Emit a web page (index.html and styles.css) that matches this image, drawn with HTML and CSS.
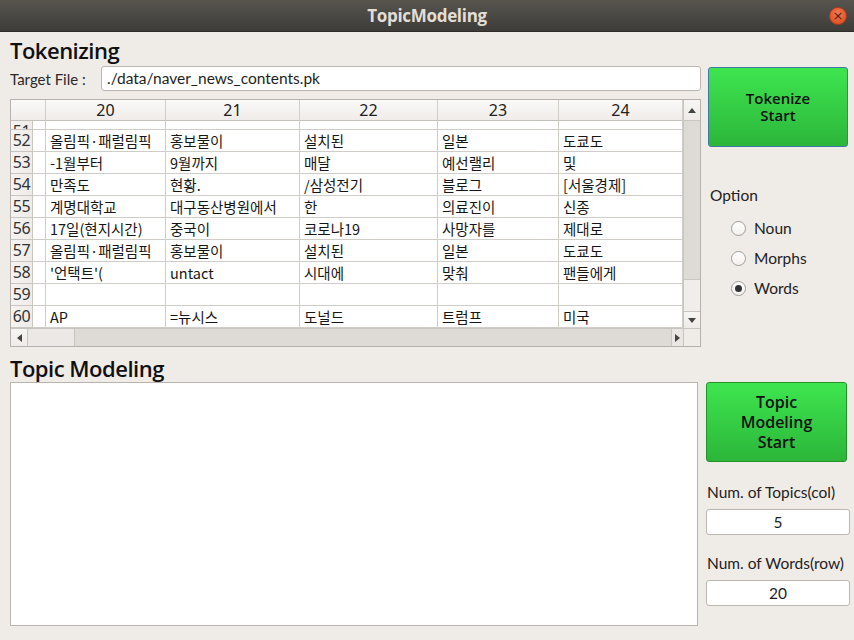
FILE: index.html
```html
<!DOCTYPE html>
<html>
<head>
<meta charset="utf-8">
<link rel="stylesheet" href="styles.css">
</head>
<body>
<div class="window">
  <header class="titlebar">
    <span></span>
    <span class="title">TopicModeling</span>
    <span class="close-wrap"><span class="close">×</span></span>
  </header>
  <main class="content">
    <section class="tok">
      <h1 class="heading">Tokenizing</h1>
      <div class="tok-body">
        <div class="tok-left">
          <div class="file-row">
            <label class="file-label">Target File :</label>
            <div class="text-input">./data/naver_news_contents.pk</div>
          </div>
          <div class="table-view">
            <div class="cells">
              <div class="hdr corner"></div>
              <div class="hdr">20</div><div class="hdr">21</div><div class="hdr">22</div><div class="hdr">23</div><div class="hdr">24</div>

              <div class="vh partial"><span>51</span></div><div class="c partial"></div><div class="c partial"></div><div class="c partial"></div><div class="c partial"></div><div class="c partial"></div><div class="c partial"></div>

              <div class="vh">52</div><div class="c"></div><div class="c">올림픽·패럴림픽</div><div class="c">홍보물이</div><div class="c">설치된</div><div class="c">일본</div><div class="c">도쿄도</div>
              <div class="vh">53</div><div class="c"></div><div class="c">-1월부터</div><div class="c">9월까지</div><div class="c">매달</div><div class="c">예선랠리</div><div class="c">및</div>
              <div class="vh">54</div><div class="c"></div><div class="c">만족도</div><div class="c">현황.</div><div class="c">/삼성전기</div><div class="c">블로그</div><div class="c">[서울경제]</div>
              <div class="vh">55</div><div class="c"></div><div class="c">계명대학교</div><div class="c">대구동산병원에서</div><div class="c">한</div><div class="c">의료진이</div><div class="c">신종</div>
              <div class="vh">56</div><div class="c"></div><div class="c">17일(현지시간)</div><div class="c">중국이</div><div class="c">코로나19</div><div class="c">사망자를</div><div class="c">제대로</div>
              <div class="vh">57</div><div class="c"></div><div class="c">올림픽·패럴림픽</div><div class="c">홍보물이</div><div class="c">설치된</div><div class="c">일본</div><div class="c">도쿄도</div>
              <div class="vh">58</div><div class="c"></div><div class="c">'언택트'(</div><div class="c">untact</div><div class="c">시대에</div><div class="c">맞춰</div><div class="c">팬들에게</div>
              <div class="vh">59</div><div class="c"></div><div class="c"></div><div class="c"></div><div class="c"></div><div class="c"></div><div class="c"></div>
              <div class="vh">60</div><div class="c"></div><div class="c">AP</div><div class="c">=뉴시스</div><div class="c">도널드</div><div class="c">트럼프</div><div class="c">미국</div>
            </div>
            <div class="vscroll">
              <div class="sb-btn sb-up"><span class="tri tri-up"></span></div>
              <div class="sb-track"></div>
              <div class="sb-handle-v"></div>
              <div class="sb-btn sb-down"><span class="tri tri-down"></span></div>
            </div>
            <div class="hscroll">
              <div class="sb-btn sb-left"><span class="tri tri-left"></span></div>
              <div class="sb-handle-h"></div>
              <div class="sb-track"></div>
              <div class="sb-btn sb-right"><span class="tri tri-right"></span></div>
            </div>
            <div class="sb-corner"></div>
          </div>
        </div>
        <div class="tok-right">
          <button class="green-btn tok-btn">Tokenize<br>Start</button>
          <div class="option-label">Option</div>
          <div class="radio-list">
            <div class="radio-row"><span class="radio"></span><span>Noun</span></div>
            <div class="radio-row"><span class="radio"></span><span>Morphs</span></div>
            <div class="radio-row"><span class="radio checked"></span><span>Words</span></div>
          </div>
        </div>
      </div>
    </section>
    <section class="topic">
      <h1 class="heading">Topic Modeling</h1>
      <div class="topic-body">
        <div class="text-area"></div>
        <div class="topic-right">
          <button class="green-btn topic-btn">Topic<br>Modeling<br>Start</button>
          <div class="num-label first">Num. of Topics(col)</div>
          <div class="num-input">5</div>
          <div class="num-label">Num. of Words(row)</div>
          <div class="num-input">20</div>
        </div>
      </div>
    </section>
  </main>
</div>
</body>
</html>
```

FILE: styles.css
```css
* { box-sizing: border-box; }
html, body { margin: 0; padding: 0; }
body {
  width: 854px;
  height: 640px;
  overflow: hidden;
  background: #efebe7;
  font-family: "Lato", "Noto Sans CJK KR", sans-serif;
  color: #1e1e1e;
}
.window { width: 854px; height: 640px; display: flex; flex-direction: column; }

.titlebar {
  height: 32px;
  flex: none;
  display: grid;
  grid-template-columns: 1fr auto 1fr;
  align-items: center;
  background: linear-gradient(#58554f, #3d3c38);
  border-bottom: 1px solid #2e2d2a;
}
.title {
  color: #e2ded6;
  font-family: "Open Sans", sans-serif;
  font-weight: 700;
  font-size: 17px;
  letter-spacing: -0.3px;
}
.close-wrap { display: flex; justify-content: flex-end; padding-right: 7px; }
.close {
  width: 18px; height: 18px;
  border-radius: 50%;
  background: radial-gradient(circle at 50% 35%, #f37a52, #d9481b);
  border: 1px solid #b23c16;
  color: #4e2213;
  font-family: "DejaVu Sans", sans-serif;
  font-size: 13px;
  line-height: 15px;
  text-align: center;
}

.content { padding-left: 10px; flex: 1; }

.heading {
  margin: 4px 0 0 0;
  height: 28px;
  line-height: 28px;
  font-family: "Open Sans", sans-serif;
  font-weight: 600;
  font-size: 22px;
  letter-spacing: -0.5px;
  color: #101010;
}

.tok-body { display: flex; gap: 7px; }
.tok-left { width: 691px; padding-top: 2px; }
.file-row { display: flex; height: 25px; align-items: center; }
.file-label { width: 91px; font-size: 15px; color: #2a2a2a; }
.text-input {
  width: 600px; height: 25px;
  background: #fff;
  border: 1px solid #bcb7b1;
  border-radius: 3px;
  padding-left: 5px;
  line-height: 23px;
  font-size: 15.5px;
  color: #1e1e1e;
}

.table-view {
  margin-top: 8px;
  width: 691px;
  height: 248px;
  border: 1px solid #b5b1ac;
  display: grid;
  grid-template-columns: 672px 17px;
  grid-template-rows: 228px 18px;
  background: #fff;
}
.cells {
  display: grid;
  grid-template-columns: 22px 13px 120px 134px 138px 121px 124px;
  grid-template-rows: 21px 9px repeat(9, 22px);
  overflow: hidden;
  font-size: 14.5px;
}
.hdr {
  background: linear-gradient(#fbfaf9, #efece9);
  border-right: 1px solid #d2cec9;
  border-bottom: 1px solid #c5c1bc;
  text-align: center;
  line-height: 20px;
  font-family: "Noto Sans", sans-serif;
  font-size: 16px;
  color: #222;
}
.hdr.corner { grid-column: span 2; }
.vh {
  background: linear-gradient(90deg, #f6f4f2, #eeebe8);
  border-right: 1px solid #c9c5c0;
  border-bottom: 1px solid #c9c5c0;
  text-align: center;
  line-height: 21px;
  font-family: "Noto Sans", sans-serif;
  font-size: 16px;
  letter-spacing: -0.3px;
  color: #333;
}
.c {
  border-right: 1px solid #d0ccc8;
  border-bottom: 1px solid #d0ccc8;
  padding-left: 4px;
  line-height: 21px;
  white-space: nowrap;
  overflow: hidden;
  font-family: "Noto Sans CJK KR", "Noto Sans", sans-serif;
  color: #161616;
}
.partial {
  display: flex;
  align-items: flex-end;
  justify-content: center;
  overflow: hidden;
}
.vh.partial span { line-height: 21px; flex: none; margin-bottom: -13px; }

.vscroll {
  display: grid;
  grid-template-rows: 21px 1fr 32px 17px;
  background: #dfdbd7;
  border-left: 1px solid #c8c4bf;
}
.sb-btn {
  display: flex; align-items: center; justify-content: center;
  background: linear-gradient(#f8f6f4, #eeebe8);
}
.sb-up { border-bottom: 1px solid #c8c4bf; }
.sb-down { border-top: 1px solid #c8c4bf; }
.sb-track { background: #dedad6; }
.sb-handle-v { background: #f0edea; border-top: 1px solid #c8c4bf; }
.hscroll {
  display: grid;
  grid-template-columns: 17px 47px 1fr 12px;
  border-top: 1px solid #c8c4bf;
  background: #dedad6;
}
.sb-left { border-right: 1px solid #c8c4bf; }
.sb-right { border-left: 1px solid #c8c4bf; background: #e9e6e3; }
.sb-handle-h { background: #ebe8e5; border-right: 1px solid #c8c4bf; }
.sb-corner { background: #efebe7; border-top: 1px solid #c8c4bf; border-left: 1px solid #c8c4bf; }
.tri { width: 0; height: 0; display: block; }
.tri-up { border-left: 4px solid transparent; border-right: 4px solid transparent; border-bottom: 5px solid #444; }
.tri-down { border-left: 4px solid transparent; border-right: 4px solid transparent; border-top: 5px solid #444; }
.tri-left { border-top: 4px solid transparent; border-bottom: 4px solid transparent; border-right: 5px solid #444; }
.tri-right { border-top: 4px solid transparent; border-bottom: 4px solid transparent; border-left: 5px solid #444; }

.tok-right { width: 140px; padding-top: 3px; }
.green-btn {
  display: block;
  width: 100%;
  background: linear-gradient(#3ee54f, #2cb63a);
  border-radius: 3px;
  font-family: "Open Sans", sans-serif;
  font-weight: 600;
  font-size: 15px;
  line-height: 17px;
  color: #111;
  padding: 0;
  text-align: center;
}
.tok-btn { height: 80px; border: 1px solid #3c78a8; }
.option-label {
  margin-top: 38px;
  margin-left: 2px;
  height: 20px;
  line-height: 20px;
  font-size: 15.5px;
  color: #222;
}
.radio-list { margin-top: 8px; }
.radio-row {
  height: 30px;
  display: flex;
  align-items: center;
  padding-left: 23px;
  gap: 8px;
  font-size: 15.5px;
  color: #222;
}
.radio {
  width: 15px; height: 15px;
  border-radius: 50%;
  border: 1px solid #a19c97;
  background: linear-gradient(#ffffff, #f3f1ee);
  display: flex; align-items: center; justify-content: center;
}
.radio.checked::after {
  content: "";
  width: 7px; height: 7px;
  border-radius: 50%;
  background: #333;
}

.topic .heading { margin-top: 7px; }
.topic-body { display: flex; gap: 8px; }
.text-area {
  width: 688px; height: 244px;
  background: #fff;
  border: 1px solid #b9b4ae;
}
.topic-right { width: 146px; }
.topic-btn { width: 141px; height: 80px; border: 1px solid #259129; line-height: 20px; font-size: 16px; }
.num-label {
  margin-top: 18px;
  margin-left: 1px;
  height: 20px;
  line-height: 20px;
  font-size: 15.5px;
  color: #222;
  white-space: nowrap;
}
.num-label.first { margin-top: 20px; }
.num-input {
  margin-top: 7px;
  width: 144px; height: 26px;
  background: #fff;
  border: 1px solid #bcb7b1;
  border-radius: 3px;
  text-align: center;
  line-height: 24px;
  font-size: 15.5px;
  color: #1e1e1e;
}
```
